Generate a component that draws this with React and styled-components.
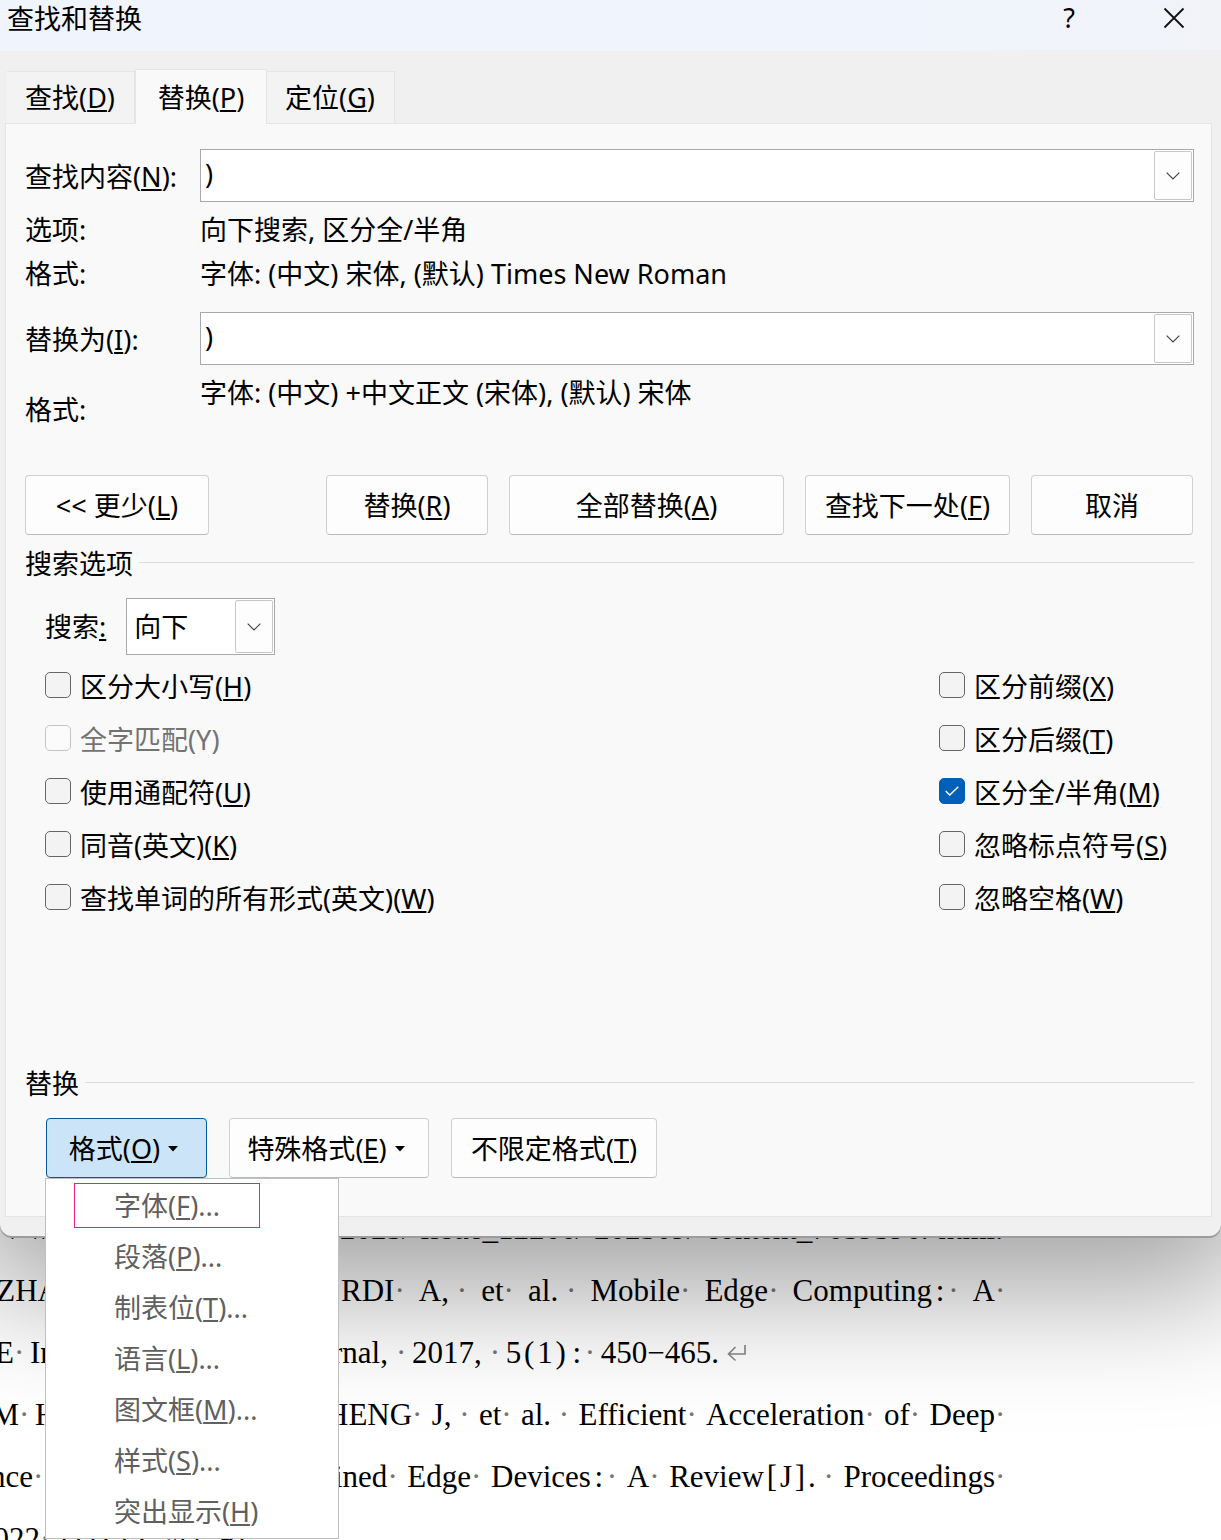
import React, { useState } from "react";
import styled, { createGlobalStyle } from "styled-components";

const GlobalStyle = createGlobalStyle`
  *,
  *::before,
  *::after {
    box-sizing: border-box;
  }
  body {
    margin: 0;
    background: #fff;
    color: #000;
    font-family: "Noto Sans", "Noto Sans CJK SC", sans-serif;
    font-size: 27px;
    line-height: 36px;
  }
  button,
  input,
  select {
    font: inherit;
    color: inherit;
    margin: 0;
  }
  u {
    text-decoration-thickness: 2px;
    text-underline-offset: 2px;
    text-decoration-skip-ink: none;
  }
`;

const Page = styled.main`
  height: 100vh;
  overflow: hidden;
`;

const Dialog = styled.section`
  position: relative;
  z-index: 1;
  padding-bottom: 19px;
  background: #f0f0f0;
  border-radius: 0 0 12px 12px;
  box-shadow: 0 2px 0 #9c9c9c, 0 24px 128px 30px rgba(0, 0, 0, 0.37);
`;

const TitleBar = styled.header`
  display: flex;
  align-items: flex-start;
  height: 51px;
  padding-left: 7px;
  background: linear-gradient(to right, #f0f4fc 75%, #f1f3f8);

  h1 {
    flex: 1;
    margin: 0;
    font-size: 27px;
    font-weight: 400;
    line-height: 38px;
  }
`;

const TitleButton = styled.button`
  display: flex;
  align-items: center;
  justify-content: center;
  width: 94px;
  height: 36px;
  margin-left: 11px;
  padding: 0;
  border: 0;
  background: none;
`;

const TabList = styled.div`
  display: flex;
  align-items: flex-end;
  height: 72px;
  padding: 0 7px;
`;

const Tab = styled.button`
  position: relative;
  min-width: ${(props) => (props.$active ? 132 : 128)}px;
  height: ${(props) => (props.$active ? 55 : 52)}px;
  margin-bottom: ${(props) => (props.$active ? -1 : 0)}px;
  padding: ${(props) => (props.$active ? "1px 20px 0" : "1px 18px 0 17px")};
  border: 1px solid #e5e5e5;
  border-left-width: ${(props) => (props.$active ? 1 : 0)}px;
  border-bottom: 0;
  background: ${(props) => (props.$active ? "#f9f9f9" : "#f3f3f3")};
  z-index: ${(props) => (props.$active ? 1 : 0)};
`;

const Panel = styled.div`
  margin: 0 9px 0 5px;
  padding: 25px 17px 38px 19px;
  border: 1px solid #e5e5e5;
  background: #f9f9f9;
`;

const Field = styled.div`
  display: grid;
  grid-template-columns: 175px 1fr;
  align-items: center;
  margin-top: ${(props) => props.$top || 0}px;

  label {
    padding-top: 2px;
  }
`;

const Note = styled.div`
  display: grid;
  grid-template-columns: 175px 1fr;
  align-items: start;
  margin-top: ${(props) => props.$top || 0}px;
  line-height: 44px;
`;

const NoteLabel = styled.span`
  padding-top: ${(props) => (props.$low ? 17 : 0)}px;
`;

const Combo = styled.div`
  display: flex;
  height: 53px;
  padding: 1px;
  border: 1px solid #a9a9ad;
  background: #fff;

  input {
    flex: 1;
    min-width: 0;
    padding: 0 3px 4px;
    border: 0;
    outline: 0;
    background: none;
  }
`;

const DropButton = styled.button`
  display: flex;
  align-items: center;
  justify-content: center;
  width: 38px;
  padding: 0;
  border: 1px solid #c8c8c8;
  border-radius: 2px;
  background: #fdfdfd;
`;

const Actions = styled.div`
  display: flex;
  gap: 21px;
  margin-top: 43px;
  padding-right: 1px;
`;

const Button = styled.button`
  display: flex;
  align-items: center;
  justify-content: center;
  gap: 8px;
  width: ${(props) => props.$width}px;
  height: 60px;
  margin-right: ${(props) => (props.$apart ? "auto" : 0)};
  padding: ${(props) => (props.$caret ? "2px 6px 0 0" : "2px 0 0")};
  border: 1px solid ${(props) => (props.$open ? "#005a9e" : "#d0d0d0")};
  border-bottom-color: ${(props) => (props.$open ? "#005a9e" : "#bababa")};
  border-radius: 4px;
  background: ${(props) => (props.$open ? "#cce4f7" : "#fdfdfd")};
  white-space: nowrap;
`;

const GroupTitle = styled.h2`
  display: flex;
  align-items: center;
  gap: 6px;
  margin: ${(props) => props.$top}px 0 16px;
  font-size: 27px;
  font-weight: 400;

  &::after {
    content: "";
    flex: 1;
    height: 1px;
    margin-bottom: 4px;
    background: #dcdcdc;
  }
`;

const SearchRow = styled.div`
  display: flex;
  align-items: center;
  gap: 20px;
  padding-left: 20px;
`;

const SelectBox = styled.div`
  display: grid;
  width: 149px;
  height: 57px;
  border: 1px solid #a9a9ad;
  background: #fff;

  select,
  span {
    grid-area: 1 / 1;
  }
  select {
    appearance: none;
    padding: 0 40px 0 7px;
    border: 0;
    outline: 0;
    background: none;
  }
  span {
    display: flex;
    align-items: center;
    justify-content: center;
    justify-self: end;
    width: 38px;
    margin: 1px;
    border: 1px solid #c8c8c8;
    border-radius: 2px;
    background: #fdfdfd;
    pointer-events: none;
  }
`;

const Options = styled.div`
  display: grid;
  grid-template-columns: 1fr 255px;
  margin-top: 5px;
  padding-left: 20px;
`;

const Option = styled.label`
  display: flex;
  align-items: center;
  gap: 9px;
  height: 53px;
  color: ${(props) => (props.$disabled ? "#737373" : "inherit")};
`;

const Tick = styled.span`
  display: grid;
  width: 26px;
  height: 26px;
  margin-bottom: 3px;

  input,
  svg {
    grid-area: 1 / 1;
  }
  input {
    appearance: none;
    width: 26px;
    height: 26px;
    border: 1px solid #666;
    border-radius: 5px;
    background: #f3f3f3;
  }
  input:checked {
    border-color: #005fb8;
    background: #005fb8;
  }
  input:disabled {
    border-color: #c4c4c4;
    background: #fbfbfb;
  }
  svg {
    place-self: center;
    pointer-events: none;
  }
`;

const FormatBar = styled.div`
  display: flex;
  gap: 22px;
  padding-left: 21px;
`;

const MenuAnchor = styled.div`
  position: relative;
`;

const Menu = styled.div`
  position: absolute;
  top: 60px;
  left: -1px;
  width: 294px;
  padding: 1px 0;
  border: 1px solid #bfbfbf;
  background: #fff;
`;

const MenuItem = styled.button`
  position: relative;
  display: block;
  width: 100%;
  height: 51px;
  padding: 0 0 0 68px;
  border: 0;
  background: none;
  color: #606060;
  text-align: left;
`;

const Marker = styled.span`
  position: absolute;
  top: 3px;
  left: 28px;
  width: 186px;
  height: 45px;
  border: 1px solid #e3267b;
`;

const Document = styled.article`
  width: 1003px;
  margin-top: -38px;
  font-family: "Liberation Serif", serif;
  font-size: 31px;
  line-height: 62px;
  white-space: nowrap;
`;

const Line = styled.p`
  display: flex;
  margin: 0;
`;

const Lead = styled.span`
  display: flex;
  flex: none;
  gap: 8px;
  width: ${(props) => props.$width}px;
`;

const Head = styled.span`
  display: flex;
  flex: none;
  justify-content: flex-end;
  width: ${(props) => props.$width}px;
`;

const Rest = styled.span`
  display: flex;
  flex: 1;
  justify-content: ${(props) => (props.$last ? "flex-start" : "space-between")};
  gap: ${(props) => (props.$last ? 8 : 0)}px;
`;

const Dot = styled.span`
  display: inline-block;
  width: 8px;
  color: #777;
  text-align: center;
`;

const Half = styled.span`
  display: inline-block;
  width: 16px;
  text-align: center;
`;

const ReturnMark = styled.svg`
  align-self: center;
`;

const Chevron = () => (
  <svg width="14" height="8" viewBox="0 0 14 8" fill="none" stroke="#444" strokeWidth="1.2">
    <path d="M0.7 0.7 L7 7 L13.3 0.7" />
  </svg>
);

const Caret = () => (
  <svg width="10" height="6" viewBox="0 0 10 6">
    <path d="M0 0H10L5 5.5Z" />
  </svg>
);

const Key = ({ text, letter, after = "" }) => (
  <span>
    {text}(<u>{letter}</u>){after}
  </span>
);

const Run = ({ text }) => (
  <span>
    {text.split(/([·()[\]:])/).map((part, i) => {
      if (part === "·") return <Dot key={i}>·</Dot>;
      if (/^[()[\]:]$/.test(part)) return <Half key={i}>{part}</Half>;
      return part;
    })}
  </span>
);

const tabs = [
  ["查找", "D"],
  ["替换", "P"],
  ["定位", "G"],
];

const options = [
  { text: "区分大小写", letter: "H" },
  { text: "区分前缀", letter: "X" },
  { text: "全字匹配", letter: "Y", disabled: true },
  { text: "区分后缀", letter: "T" },
  { text: "使用通配符", letter: "U" },
  { text: "区分全/半角", letter: "M", checked: true },
  { text: "同音(英文)", letter: "K" },
  { text: "忽略标点符号", letter: "S" },
  { text: "查找单词的所有形式(英文)", letter: "W" },
  { text: "忽略空格", letter: "W" },
];

const menuItems = [
  ["字体", "F", "..."],
  ["段落", "P", "..."],
  ["制表位", "T", "..."],
  ["语言", "L", "..."],
  ["图文框", "M", "..."],
  ["样式", "S", "..."],
  ["突出显示", "H", ""],
];

// lead: width of the part left of the menu edge, cut: where its first word ends
const lines = [
  {
    lead: 340,
    cut: 20,
    head: "/",
    next: "w",
    rest: ["2023/", "issue_12266/", "202309/", "content_7059396.", "html."],
  },
  {
    lead: 341,
    cut: 60,
    head: "ZHA",
    rest: ["RDI·", "A, ·", "et·", "al. ·", "Mobile·", "Edge·", "Computing:·", "A·"],
  },
  {
    lead: 332,
    cut: 22,
    head: "E·",
    next: "In",
    rest: ["rnal,", "·", "2017,", "·", "5(1):·", "450−465."],
    last: true,
  },
  {
    lead: 326,
    cut: 27,
    head: "M·",
    next: "H",
    rest: ["HENG·", "J, ·", "et·", "al. ·", "Efficient·", "Acceleration·", "of·", "Deep·"],
  },
  {
    lead: 334,
    cut: 41,
    head: "nce·",
    rest: ["ined·", "Edge·", "Devices:·", "A·", "Review[J]. ·", "Proceedings·"],
  },
  { lead: 300, cut: 48, head: "022·", next: "111(1):·42–91.", rest: [] },
];

const App = () => {
  const [active, setActive] = useState("P");
  const [find, setFind] = useState(")");
  const [replace, setReplace] = useState(")");

  return (
    <>
      <GlobalStyle />
      <Page lang="zh-CN">
        <Dialog role="dialog" aria-labelledby="dialog-title">
          <TitleBar>
            <h1 id="dialog-title">查找和替换</h1>
            <TitleButton type="button">?</TitleButton>
            <TitleButton type="button" aria-label="关闭">
              <svg width="22" height="22" viewBox="0 0 22 22" stroke="#111" strokeWidth="1.8">
                <path d="M1.5 1.5 L20.5 20.5 M20.5 1.5 L1.5 20.5" />
              </svg>
            </TitleButton>
          </TitleBar>

          <TabList role="tablist">
            {tabs.map(([text, letter]) => (
              <Tab
                key={letter}
                type="button"
                role="tab"
                aria-selected={active === letter}
                $active={active === letter}
                onClick={() => setActive(letter)}
              >
                <Key text={text} letter={letter} />
              </Tab>
            ))}
          </TabList>

          <Panel role="tabpanel">
            <Field>
              <label htmlFor="find">
                <Key text="查找内容" letter="N" after=":" />
              </label>
              <Combo>
                <input id="find" value={find} onChange={(e) => setFind(e.target.value)} />
                <DropButton type="button" aria-label="查找内容">
                  <Chevron />
                </DropButton>
              </Combo>
            </Field>
            <Note $top={6}>
              <NoteLabel>选项:</NoteLabel>
              <span>向下搜索, 区分全/半角</span>
            </Note>
            <Note>
              <NoteLabel>格式:</NoteLabel>
              <span>字体: (中文) 宋体, (默认) Times New Roman</span>
            </Note>
            <Field $top={16}>
              <label htmlFor="replace">
                <Key text="替换为" letter="I" after=":" />
              </label>
              <Combo>
                <input id="replace" value={replace} onChange={(e) => setReplace(e.target.value)} />
                <DropButton type="button" aria-label="替换为">
                  <Chevron />
                </DropButton>
              </Combo>
            </Field>
            <Note $top={6}>
              <NoteLabel $low>格式:</NoteLabel>
              <span>字体: (中文) +中文正文 (宋体), (默认) 宋体</span>
            </Note>

            <Actions>
              <Button type="button" $width={184} $apart>
                <Key text="<< 更少" letter="L" />
              </Button>
              <Button type="button" $width={162}>
                <Key text="替换" letter="R" />
              </Button>
              <Button type="button" $width={275}>
                <Key text="全部替换" letter="A" />
              </Button>
              <Button type="button" $width={205}>
                <Key text="查找下一处" letter="F" />
              </Button>
              <Button type="button" $width={162}>
                取消
              </Button>
            </Actions>

            <GroupTitle $top={11}>搜索选项</GroupTitle>
            <SearchRow>
              <label htmlFor="direction">
                搜索<u>:</u>
              </label>
              <SelectBox>
                <select id="direction" defaultValue="down">
                  <option value="down">向下</option>
                  <option value="up">向上</option>
                  <option value="all">全部</option>
                </select>
                <span>
                  <Chevron />
                </span>
              </SelectBox>
            </SearchRow>
            <Options>
              {options.map(({ text, letter, checked, disabled }) => (
                <Option key={text} $disabled={disabled}>
                  <Tick>
                    <input type="checkbox" defaultChecked={checked} disabled={disabled} />
                    {checked && (
                      <svg width="14" height="10" viewBox="0 0 14 10" fill="none" stroke="#fff" strokeWidth="1.4">
                        <path d="M0.7 5 L4.8 9 L13.3 0.7" />
                      </svg>
                    )}
                  </Tick>
                  {disabled ? (
                    <span>
                      {text}({letter})
                    </span>
                  ) : (
                    <Key text={text} letter={letter} />
                  )}
                </Option>
              ))}
            </Options>

            <GroupTitle $top={141}>替换</GroupTitle>
            <FormatBar>
              <MenuAnchor>
                <Button type="button" aria-haspopup="menu" aria-expanded="true" $width={161} $open $caret>
                  <Key text="格式" letter="O" />
                  <Caret />
                </Button>
                <Menu role="menu">
                  {menuItems.map(([text, letter, after], i) => (
                    <MenuItem key={letter} type="button" role="menuitem">
                      {i === 0 && <Marker />}
                      <Key text={text} letter={letter} after={after} />
                    </MenuItem>
                  ))}
                </Menu>
              </MenuAnchor>
              <Button type="button" aria-haspopup="menu" $width={200} $caret>
                <Key text="特殊格式" letter="E" />
                <Caret />
              </Button>
              <Button type="button" $width={206}>
                <Key text="不限定格式" letter="T" />
              </Button>
            </FormatBar>
          </Panel>
        </Dialog>

        <Document lang="en">
          {lines.map((line) => (
            <Line key={line.head}>
              <Lead $width={line.lead}>
                <Head $width={line.cut}>
                  <Run text={line.head} />
                </Head>
                {line.next && <Run text={line.next} />}
              </Lead>
              <Rest $last={line.last}>
                {line.rest.map((word, i) => (
                  <Run key={i} text={word} />
                ))}
                {line.last && (
                  <ReturnMark width="20" height="18" viewBox="0 0 20 18" fill="none" stroke="#888" strokeWidth="1.6">
                    <path d="M18 1V10H2 M8.5 3L1.5 10L8.5 16.5" />
                  </ReturnMark>
                )}
              </Rest>
            </Line>
          ))}
        </Document>
      </Page>
    </>
  );
};

export default App;
